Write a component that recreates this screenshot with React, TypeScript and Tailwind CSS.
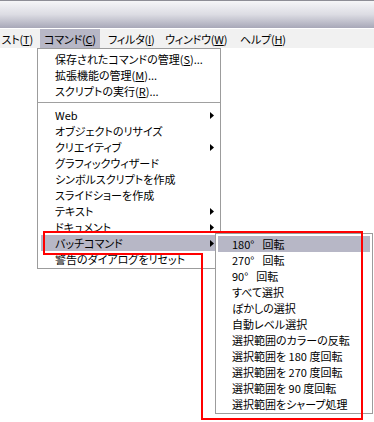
import React from "react";

type Item =
  | { kind: "sep" }
  | { kind: "item"; label: React.ReactNode; sub?: boolean; active?: boolean };

const u = (c: string) => <span className="underline underline-offset-[1px]">{c}</span>;

const mainItems: Item[] = [
  { kind: "item", label: <>保存されたコマンドの管理({u("S")})...</> },
  { kind: "item", label: <>拡張機能の管理({u("M")})...</> },
  { kind: "item", label: <>スクリプトの実行({u("R")})...</> },
  { kind: "sep" },
  { kind: "item", label: "Web", sub: true },
  { kind: "item", label: "オブジェクトのリサイズ" },
  { kind: "item", label: "クリエイティブ", sub: true },
  { kind: "item", label: "グラフィックウィザード" },
  { kind: "item", label: "シンボルスクリプトを作成" },
  { kind: "item", label: "スライドショーを作成" },
  { kind: "item", label: "テキスト", sub: true },
  { kind: "item", label: "ドキュメント", sub: true },
  { kind: "item", label: "バッチコマンド", sub: true, active: true },
  { kind: "item", label: "警告のダイアログをリセット" },
];

const subItems: { label: React.ReactNode; active?: boolean }[] = [
  { label: <>180°<span className="ml-[8px]">回転</span></>, active: true },
  { label: <>270°<span className="ml-[8px]">回転</span></> },
  { label: <>90°<span className="ml-[8px]">回転</span></> },
  { label: "すべて選択" },
  { label: "ぼかしの選択" },
  { label: "自動レベル選択" },
  { label: "選択範囲のカラーの反転" },
  { label: "選択範囲を 180 度回転" },
  { label: "選択範囲を 270 度回転" },
  { label: "選択範囲を 90 度回転" },
  { label: "選択範囲をシャープ処理" },
];

function Arrow() {
  return (
    <svg width="4" height="7" viewBox="0 0 4 7" className="shrink-0">
      <polygon points="0,0 4,3.5 0,7" fill="#000" />
    </svg>
  );
}

export default function App() {
  return (
    <div className="relative w-[374px] h-[422px] overflow-hidden bg-white text-black text-[11px] leading-[16px] [font-feature-settings:'palt'] font-['Noto_Sans_CJK_JP','Noto_Sans',sans-serif]">
      {/* title bar */}
      <div className="h-[28px] border-t border-[#8e8e96] bg-gradient-to-b from-[#f6f6f8] via-[#dcdce3] to-[#a8a8b8]" />
      <div className="h-px bg-white" />

      {/* menu bar */}
      <div className="flex h-[19px] items-center whitespace-nowrap bg-[#f1f1f1] tracking-[-0.2px]">
        <div className="flex h-full w-[40px] shrink-0 items-center justify-end pr-[7px]">
          <span>スト({u("T")})</span>
        </div>
        <div className="flex h-full w-[60px] shrink-0 items-center bg-[#b7b7c6] pl-[4px]">
          <span>コマンド({u("C")})</span>
        </div>
        <div className="flex h-full w-[60px] shrink-0 items-center pl-[8px]">
          <span>フィルタ({u("I")})</span>
        </div>
        <div className="flex h-full w-[74px] shrink-0 items-center pl-[5px]">
          <span>ウィンドウ({u("W")})</span>
        </div>
        <div className="flex h-full w-[56px] shrink-0 items-center pl-[6px]">
          <span>ヘルプ({u("H")})</span>
        </div>
      </div>

      {/* main dropdown */}
      <div className="absolute left-[37px] top-[48px] w-[184px] border border-[#9c9c9c] bg-white px-[3px] pt-[2px] pb-px">
        {mainItems.map((it, i) =>
          it.kind === "sep" ? (
            <div key={i} className="-mx-[3px] flex h-[8px] items-center">
              <div className="w-full border-t border-b border-t-[#a0a0a0] border-b-white" />
            </div>
          ) : (
            <div
              key={i}
              className={`flex h-[16px] items-center justify-between whitespace-nowrap pl-[14px] pr-[3px] ${
                it.active ? "bg-[#b7b7c6]" : ""
              }`}
            >
              <span>{it.label}</span>
              {it.sub && <Arrow />}
            </div>
          )
        )}
      </div>

      {/* submenu */}
      <div className="absolute left-[215px] top-[233px] w-[158px] border border-[#9c9c9c] bg-white px-[2px] pt-[2px] pb-px">
        {subItems.map((it, i) => (
          <div
            key={i}
            className={`flex h-[16px] items-center whitespace-nowrap pl-[14px] ${it.active ? "bg-[#b7b7c6]" : ""}`}
          >
            <span>{it.label}</span>
          </div>
        ))}
      </div>

      {/* red annotation */}
      <svg className="pointer-events-none absolute left-0 top-0" width="374" height="422">
        <polygon
          points="44,232 362,232 362,419 202,419 202,254 44,254"
          fill="none"
          stroke="#ff0000"
          strokeWidth="2"
        />
      </svg>
    </div>
  );
}
